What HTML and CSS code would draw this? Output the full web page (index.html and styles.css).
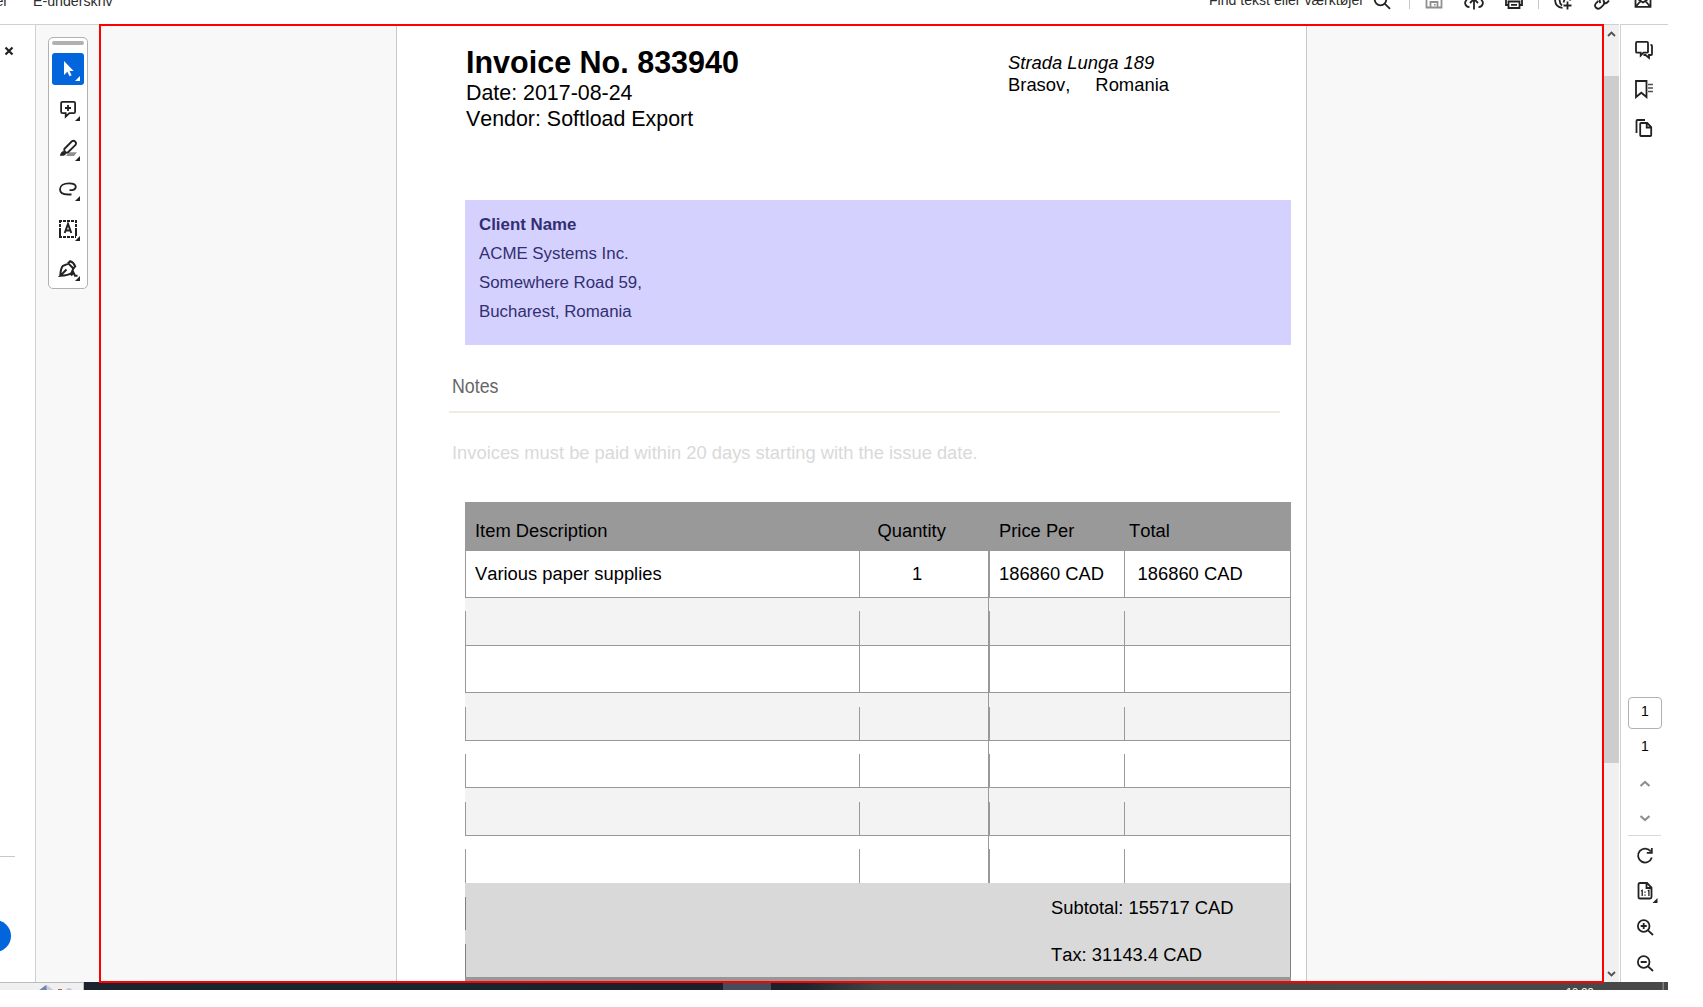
FILE: index.html
```html
<!DOCTYPE html>
<html lang="da">
<head>
<meta charset="utf-8">
<title>Invoice No. 833940</title>
<link rel="stylesheet" href="styles.css">
</head>
<body>
<header class="topbar">
  <div class="topbar-row">
    <span class="menu menu-cut">er</span>
    <span class="menu">E-underskriv</span>
    <span class="search">Find tekst eller værktøjer</span>
    <svg class="ic ic-search" viewBox="0 0 20 20"><circle cx="8.5" cy="9.5" r="5.8"/><path d="M12.7 13.7 18 18.8"/></svg>
    <i class="vr"></i>
    <svg class="ic ic-save muted" viewBox="0 0 20 20"><path d="M2.5 2.5h12l3 3v12h-15zM6.5 17v-5h7v5M10.800 14v1.500"/></svg>
    <svg class="ic ic-up" viewBox="0 0 20 20"><path d="M10 19.500V9M6 13l4-4 4 4M5.500 17.200C.6 17 0 11.500 3 10M14.500 17.200c4.900-.2 5.500-5.700 2.500-7.200"/></svg>
    <svg class="ic ic-print" viewBox="0 0 20 20"><path d="M5 15H2V7h16v8h-3M4.500 11.500h11v6.500h-11zM7 14.800h6"/></svg>
    <i class="vr"></i>
    <svg class="ic ic-share" viewBox="0 0 20 20"><path d="M2 9c0 5.500 2.500 8.500 7.500 8.800M6.500 9c0 3 .5 5 2.500 6.500M17.500 9l-1 1.500M11.500 9.500l-1 3M14.500 11.500v8M10.500 15.500h8"/></svg>
    <svg class="ic ic-link" viewBox="0 0 20 20"><path d="M8.500 13c-1.500-2-1-3.500.5-5M11 10c2 2 1.800 3.500.5 4.800l-2.500 2.500c-3.500 3.500-8-.8-4.800-4.300l2-2M11 13.500c2.500.5 4 0 6-3"/></svg>
    <svg class="ic ic-mail" viewBox="0 0 20 20"><path d="M2.500 6v10.800h15V6M3 16.500l4.500-5.500M17 16.500 12.500 11M5.500 9.500 10 12.500l4.500-3"/></svg>
  </div>
</header>

<main class="workspace">
  <aside class="side">
    <svg class="close" viewBox="0 0 10 10"><path d="M1.500 1.500l7 7M8.500 1.500l-7 7"/></svg>
    <hr class="side-line">
    <div class="fab"></div>
  </aside>

  <nav class="tools">
    <div class="toolbox">
      <div class="grip"></div>
      <button class="tool active"><svg viewBox="0 0 32 32"><path class="f" d="M12 8v14l3.300-3.200 2.300 4.500 2-1-2.100-4.400h4.200z"/><path class="f" d="M28 23v5h-5z"/></svg></button>
      <button class="tool"><svg viewBox="0 0 32 32"><path d="M10.500 8.900h11.200q1.400 0 1.400 1.400v8.500q0 1.400-1.400 1.400h-4.300l-3.700 3.500v-3.500h-3.200q-1.400 0-1.400-1.400v-8.500q0-1.400 1.400-1.400zM16 12v6M13 15h6"/><path class="f" d="M28 23v5h-5z"/></svg></button>
      <button class="tool"><svg viewBox="0 0 32 32"><path class="g" d="M17 19.300h8l-3 3.700h-8z"/><path class="w" d="M12.300 16 19.900 8.300q1.800-1.200 3.300.3t.3 3.300L15.800 19.500q-1.200.8-2.600-.6t-.9-2.900z"/><path class="f" d="M11.500 18q-2.800.8-3.700 4.800h3.700q2.500-.3 2.500-2.600z"/><path class="f" d="M28 23v5h-5z"/></svg></button>
      <button class="tool"><svg viewBox="0 0 32 32"><path d="M17.500 17.200h3q3.300-.7 3.300-3.400c0-2.500-3-3.400-6.800-3.400-5.500 0-9 2.200-9 5.800 0 3.500 3.500 5.300 8 5.300h3.500"/><path class="f" d="M28 23v5h-5z"/></svg></button>
      <button class="tool"><svg viewBox="0 0 32 32"><path class="b" stroke-dasharray="3 1" d="M7 8h18M7 24h17"/><path class="b" stroke-dasharray="3 1 3 1 10" d="M8 7v18M24 7v16"/><path class="b" d="M12.700 20 16 11l3.300 9M13.700 17.500h4.600"/><path class="f" d="M28 23v5h-5z"/></svg></button>
      <button class="tool"><svg viewBox="0 0 32 32"><path class="b" d="M8.300 22.800c.2-4.500 1.200-8.500 2.700-10l5.500-2.200 4.900 4.900-1.900 4.500q-3 2.500-11.200 2.800l6.200-6.300M15.800 10.500l2.400-2.300q3.500 1 5 5.200l-1.900 2.200M19 22.500l2.500-3 1.500 3.200h2.500"/><path class="f" d="M28 23v5h-5z"/></svg></button>
    </div>
  </nav>

  <section class="viewer">
    <article class="sheet">
      <header class="inv-head">
        <div class="inv-title">
          <h1>Invoice No. 833940</h1>
          <p>Date: 2017-08-24</p>
          <p>Vendor: Softload Export</p>
        </div>
        <address class="inv-addr">
          <em>Strada Lunga 189</em>
          <span class="city"><span>Brasov,</span><span>Romania</span></span>
        </address>
      </header>
      <section class="client">
        <strong>Client Name</strong>
        <span>ACME Systems Inc.</span>
        <span>Somewhere Road 59,</span>
        <span>Bucharest, Romania</span>
      </section>
      <section class="notes">
        <h2><span>Notes</span></h2>
        <p>Invoices must be paid within 20 days starting with the issue date.</p>
      </section>
      <div class="items">
        <div class="row head"><span>Item Description</span><span>Quantity</span><span>Price Per</span><span>Total</span></div>
        <div class="row full first"><span>Various paper supplies</span><span>1</span><span>186860 CAD</span><span>186860 CAD</span></div>
        <div class="row alt"><span></span><span></span><span></span><span></span></div>
        <div class="row full"><span></span><span></span><span></span><span></span></div>
        <div class="row alt low"><span></span><span></span><span></span><span></span></div>
        <div class="row"><span></span><span></span><span></span><span></span></div>
        <div class="row alt low"><span></span><span></span><span></span><span></span></div>
        <div class="row last"><span></span><span></span><span></span><span></span></div>
        <div class="sum">Subtotal: 155717 CAD</div>
        <div class="sum">Tax: 31143.4 CAD</div>
        <div class="grand"></div>
      </div>
    </article>
  </section>

  <div class="scroll">
    <svg viewBox="0 0 9 6"><path d="M1 5l3.500-3.500L8 5"/></svg>
    <div class="thumb"></div>
    <svg class="dn" viewBox="0 0 9 6"><path d="M1 1l3.500 3.500L8 1"/></svg>
  </div>

  <aside class="rail">
    <div class="rail-top">
      <svg viewBox="0 0 20 20"><path d="M3 1.900h10q1 0 1 1v8.800q0 1-1 1H9.500L6.700 15.500v-2.800H3q-1 0-1-1V2.900q0-1 1-1zM16.500 5h.5q1 0 1 1v8q0 1-1 1h-2v2.800L11.500 15h-2"/></svg>
      <svg viewBox="0 0 20 20"><path d="M2 2h10.500v16l-5.200-4.300L2 18z"/><path class="lines" d="M14 5.500h5M14 9h5M14 12.500h5"/></svg>
      <svg viewBox="0 0 20 20"><path d="M7 5h6.200L17.200 9v8.200q0 .8-.8.800H7q-.8 0-.8-.8V5.800Q6.200 5 7 5zM12.700 5v4.500h4.500M2.500 15V3q0-1 1-1H11"/></svg>
    </div>
    <div class="rail-bottom">
      <div class="page-box">1</div>
      <div class="page-count">1</div>
      <svg class="chev" viewBox="0 0 12 8"><path d="M1.500 6 6 2l4.500 4"/></svg>
      <svg class="chev" viewBox="0 0 12 8"><path d="M1.500 2 6 6l4.500-4"/></svg>
      <hr>
      <svg class="big" viewBox="0 0 28 20"><path d="M19.800 6.500a7 7 0 1 0 1 6M20.800 3v4.800h-5"/></svg>
      <svg class="big" viewBox="0 0 28 20"><path d="M9 2h7l4.500 4.500V16q0 1.500-1.500 1.500H9Q7.500 17.500 7.500 16V3.500Q7.500 2 9 2zM15.500 2v5h5"/><path class="thin" d="M10 10l1.200-.7V15M16.700 10l1.200-.7V15M14 10.500v1.200M14 13.500v1.200"/><path class="f" d="M26.500 17v5h-5z"/></svg>
      <svg class="big" viewBox="0 0 28 20"><circle cx="12.700" cy="9" r="5.800"/><path d="M17 13.300l5 4.700M9.700 9h6M12.700 6v6"/></svg>
      <svg class="big" viewBox="0 0 28 20"><circle cx="12.700" cy="9" r="5.800"/><path d="M17 13.300l5 4.700M9.700 9h6"/></svg>
    </div>
  </aside>
</main>

<footer class="taskbar">
  <div class="weather"><svg viewBox="0 0 36 7"><path fill="#6d87ad" d="M0 7 8 1l8 6z"/><path fill="#c9cbe6" d="M8 1l9 6H9z"/><path fill="#d4505c" d="M20 5h4v2h-4z"/><path fill="#c6c4dd" d="M27 7q4-6 8 0z"/></svg></div>
  <div class="strip"><span class="clock">10:22</span></div>
</footer>
</body>
</html>
```
FILE: styles.css
```css
* { box-sizing: border-box; }
body { margin: 0; background: #fff; font-family: "Liberation Sans", Arial, sans-serif; font-kerning: none; color: #000; overflow: hidden; }
h1, h2, p, hr { margin: 0; border: 0; font-weight: normal; }
svg { display: block; flex: none; fill: none; stroke: #222; stroke-width: 1.8; overflow: visible; }
svg .f { fill: #222; stroke: none; }
svg .g { fill: #909090; stroke: none; }
svg .w { fill: #fff; }
svg .b { stroke-width: 2; }
svg .thin { stroke-width: 1.3; }
svg .lines { stroke: #505050; stroke-width: 1.6; }

/* top bar, scrolled partly out of view */
.topbar { height: 24px; overflow: hidden; }
.topbar-row { display: flex; align-items: center; height: 44px; margin-top: -22px; width: 1667px; font-size: 14.2px; color: #2c2c2c; white-space: nowrap; }
.menu { padding-top: 2px; }
.menu-cut { width: 8px; margin-right: 25px; display: flex; justify-content: flex-end; }
.search { margin-left: auto; font-size: 14.1px; }
.ic { width: 20px; height: 20px; }
.ic-search { margin-left: 8px; }
.vr { width: 1px; height: 18px; background: #c8c8c8; }
.ic-search + .vr { margin-left: 17px; }
.ic-save { margin-left: 14px; }
.muted { stroke: #909090; }
.ic-up { margin-left: 20px; }
.ic-print { margin-left: 20px; }
.ic-print + .vr { margin-left: 14px; }
.ic-share { margin-left: 14px; }
.ic-link { margin-left: 19px; }
.ic-mail { margin: 0 14px 0 21px; }

.workspace { display: flex; height: 958px; width: 1668px; }

.side { width: 36px; border-top: 1px solid #d0d0d0; border-right: 1px solid #d0d0d0; overflow: hidden; }
.close { width: 10px; height: 10px; margin: 21px 0 0 4px; stroke-width: 2.2; }
.side-line { width: 15px; height: 1px; margin-top: 800px; background: #c8c8c8; }
.fab { width: 32px; height: 32px; margin: 63px 0 0 -21px; border-radius: 50%; background: #0265dc; }

.tools { width: 63px; padding: 12px 0 0 12px; border-top: 1px solid #d0d0d0; background: #f8f8f8; }
.toolbox { display: flex; flex-direction: column; gap: 8px; width: 40px; height: 252px; padding: 3px; border: 1px solid #b1b1b1; border-radius: 5px; background: #fff; }
.grip { height: 4px; border-radius: 2px; background: #b1b1b1; }
.tool { width: 32px; height: 32px; padding: 0; border: 0; border-radius: 3px; background: none; }
.tool svg { width: 32px; height: 32px; }
.active { background: #0265dc; }
.active .f { fill: #fff; }

.viewer { position: relative; z-index: 1; width: 1505px; height: 959px; border: 2px solid #f00; background: #f8f8f8; overflow: hidden; }
.sheet { width: 911px; height: 957px; margin-left: 295px; border: solid #c8c8c8; border-width: 0 1px; background: #fff; }

.inv-head { display: flex; height: 174px; padding: 19px 0 0 68px; }
.inv-title { width: 543px; padding-left: 1px; font-size: 21.4px; line-height: 26px; }
.inv-title h1 { font-size: 30.5px; font-weight: bold; line-height: 34px; height: 35px; }
.inv-addr { font-size: 18.4px; font-style: normal; line-height: 22px; padding-top: 7px; }
.inv-addr em { display: block; }
.city { display: flex; gap: 25px; }

.client { display: flex; flex-direction: column; width: 826px; height: 145px; margin-left: 68px; padding: 10px 14px; background: #d4d1ff; color: #332e70; font-size: 16.85px; line-height: 29px; }

.notes { margin-left: 52px; height: 157px; }
.notes h2 { width: 831px; height: 68px; padding: 29px 0 0 3px; border-bottom: 2px solid #efebe0; font-size: 20px; line-height: 24px; color: #666; }
.notes h2 span { display: inline-block; transform: scaleX(.89); transform-origin: left; }
.notes p { padding: 29px 0 0 3px; font-size: 18.33px; line-height: 22px; color: #d9d9d9; }

.items { width: 826px; margin-left: 68px; font-size: 18.35px; }
.row { --gap: 13px; display: grid; grid-template-columns: 394px 129px 136px 167px; height: 47px; border-bottom: 1px solid #999; }
.row > span { padding-left: 10px; line-height: 45px; background: linear-gradient(#999, #999) left bottom / 1px calc(100% - var(--gap)) no-repeat; }
.row > span:nth-child(3) { border-left: 1px solid #999; padding-left: 10px; }
.row > span:nth-child(4) { border-right: 1px solid #999; }
.alt { height: 48px; background: #f3f3f3; }
.low { --gap: 14px; }
.full { --gap: 0px; }
.last { border-bottom: 0; }
.row.head { height: 49px; background: #999; border: 0; }
.row.head > span { line-height: 57px; background: none; }
.row.head > span:nth-child(3) { border-color: transparent; }
.row.head > span:nth-child(2) { padding-left: 18.5px; }
.row.head > span:nth-child(4) { padding-left: 5px; }
.first > span:nth-child(2) { padding-left: 53px; }
.first > span:nth-child(4) { padding-left: 13.600px; }
.sum { height: 47px; padding-left: 586px; line-height: 50px; border-right: 1px solid #808080; background: linear-gradient(#808080, #808080) left bottom / 1px 33px no-repeat #d9d9d9; }
.grand { height: 6px; background: #979797; }

.scroll { display: flex; flex-direction: column; align-items: center; width: 15px; margin-right: 1px; padding: 6px 0 5px; border-top: 1px solid #d0d0d0; background: #f0f0f0; }
.scroll svg { width: 9px; height: 6px; stroke: #505050; }
.thumb { width: 15px; height: 687px; margin-top: 39px; background: #cdcdcd; }
.scroll .dn { margin-top: auto; }

.rail { display: flex; flex-direction: column; width: 48px; border-top: 1px solid #d0d0d0; border-left: 1px solid #d0d0d0; }
.rail-top { display: flex; flex-direction: column; gap: 19px; padding: 15px 0 0 13px; }
.rail-top svg { width: 20px; height: 20px; }
.rail-bottom { display: flex; flex-direction: column; align-items: center; margin-top: 559px; font-size: 14px; }
.page-box { width: 34px; height: 32px; padding-left: 1px; border: 1px solid #b1b1b1; border-radius: 4px; text-align: center; line-height: 27px; }
.page-count { height: 32px; padding-left: 1px; line-height: 34px; margin-bottom: 19px; }
.chev { width: 12px; height: 8px; stroke: #909090; stroke-width: 2.2; margin-bottom: 26px; }
.rail-bottom hr { width: 33px; height: 1px; margin: -13px 0 9px; background: #d8d8d8; }
.big { width: 28px; height: 20px; margin-bottom: 16px; }

.taskbar { display: flex; width: 1668px; height: 8px; overflow: hidden; }
.weather { width: 84px; padding: 1px 0 0 38px; border-top: 1px solid #bbb; border-right: 1px solid #bbb; background: #f0f0f0; }
.weather svg { width: 36px; height: 7px; stroke: none; }
.strip { flex: 1; height: 8px; padding-left: 1482px; background: linear-gradient(90deg, #1b222d 0, #17252e 120px, #17252e 380px, #1b1f2b 600px, #1b1f2b 639px, #484b59 639px, #484b59 687px, #1b212b 687px, #1d242d 720px, #484644 800px, #484848 1578px, #808080 1579px, #808080 1580px, #484848 1580px); }
.clock { display: block; padding-top: 4px; font-size: 11px; line-height: 13px; color: #fff; }
```
